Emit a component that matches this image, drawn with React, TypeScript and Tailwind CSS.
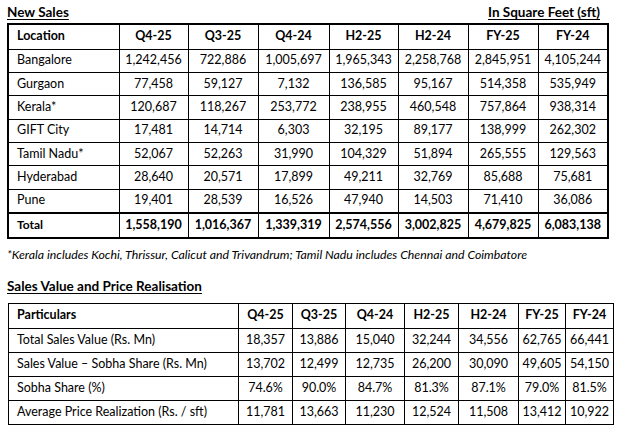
import React from "react";

const salesCols = ["Q4-25", "Q3-25", "Q4-24", "H2-25", "H2-24", "FY-25", "FY-24"];

const salesRows: [string, string[]][] = [
  ["Bangalore", ["1,242,456", "722,886", "1,005,697", "1,965,343", "2,258,768", "2,845,951", "4,105,244"]],
  ["Gurgaon", ["77,458", "59,127", "7,132", "136,585", "95,167", "514,358", "535,949"]],
  ["Kerala*", ["120,687", "118,267", "253,772", "238,955", "460,548", "757,864", "938,314"]],
  ["GIFT City", ["17,481", "14,714", "6,303", "32,195", "89,177", "138,999", "262,302"]],
  ["Tamil Nadu*", ["52,067", "52,263", "31,990", "104,329", "51,894", "265,555", "129,563"]],
  ["Hyderabad", ["28,640", "20,571", "17,899", "49,211", "32,769", "85,688", "75,681"]],
  ["Pune", ["19,401", "28,539", "16,526", "47,940", "14,503", "71,410", "36,086"]],
];

const salesTotal = ["1,558,190", "1,016,367", "1,339,319", "2,574,556", "3,002,825", "4,679,825", "6,083,138"];

const valueRows: [string, string[]][] = [
  ["Total Sales Value (Rs. Mn)", ["18,357", "13,886", "15,040", "32,244", "34,556", "62,765", "66,441"]],
  ["Sales Value – Sobha Share (Rs. Mn)", ["13,702", "12,499", "12,735", "26,200", "30,090", "49,605", "54,150"]],
  ["Sobha Share (%)", ["74.6%", "90.0%", "84.7%", "81.3%", "87.1%", "79.0%", "81.5%"]],
  ["Average Price Realization (Rs. / sft)", ["11,781", "13,663", "11,230", "12,524", "11,508", "13,412", "10,922"]],
];

const salesWidths = ["w-[111px]", "w-[69px]", "w-[70px]", "w-[71px]", "w-[69px]", "w-[70px]", "w-[70px]", "w-[70px]"];
const valueWidths = ["w-[230px]", "w-[54px]", "w-[53px]", "w-[59px]", "w-[54px]", "w-[60px]", "w-[47px]", "w-[48px]"];

const App: React.FC = () => {
  return (
    <div
      className="w-[628px] h-[434px] bg-white text-black pl-[7px] pt-[4px]"
      style={{ fontFamily: "Lato, 'Liberation Sans', sans-serif" }}
    >
      <div className="flex justify-between w-[600px] h-[19px] text-[13.5px] font-bold leading-[16px]">
        <span className="underline underline-offset-2">New Sales</span>
        <span className="underline underline-offset-2 pr-[7px]">In Square Feet (sft)</span>
      </div>

      <table className="table-fixed border-collapse border-2 border-black w-[600px] text-[12.5px]">
        <colgroup>
          {salesWidths.map((w, i) => (
            <col key={i} className={w} />
          ))}
        </colgroup>
        <thead>
          <tr className="h-[25px] font-bold">
            <th className="border border-black text-left pl-[8px]">Location</th>
            {salesCols.map((c) => (
              <th key={c} className="border border-black text-center">
                {c}
              </th>
            ))}
          </tr>
        </thead>
        <tbody>
          {salesRows.map(([name, vals]) => (
            <tr key={name} className="h-[23.4px]">
              <td className="border border-black pl-[8px]">{name}</td>
              {vals.map((v, i) => (
                <td key={i} className="border border-black text-center">
                  {v}
                </td>
              ))}
            </tr>
          ))}
          <tr className="h-[25px] font-bold border-t-2 border-black">
            <td className="border border-black border-t-2 pl-[8px] text-[12px]">Total</td>
            {salesTotal.map((v, i) => (
              <td key={i} className="border border-black border-t-2 text-center">
                {v}
              </td>
            ))}
          </tr>
        </tbody>
      </table>

      <p className="mt-[8px] h-[16px] text-[12.3px] italic leading-[16px]">
        *Kerala includes Kochi, Thrissur, Calicut and Trivandrum; Tamil Nadu includes Chennai and Coimbatore
      </p>

      <div className="mt-[15px] h-[25px] text-[13.5px] font-bold leading-[16px]">
        <span className="underline underline-offset-2">Sales Value and Price Realisation</span>
      </div>

      <table className="ml-[1px] table-fixed border-collapse border border-black w-[605px] text-[12.5px]">
        <colgroup>
          {valueWidths.map((w, i) => (
            <col key={i} className={w} />
          ))}
        </colgroup>
        <thead>
          <tr className="h-[25px] font-bold">
            <th className="border border-black text-left pl-[8px]">Particulars</th>
            {salesCols.map((c) => (
              <th key={c} className="border border-black text-center">
                {c}
              </th>
            ))}
          </tr>
        </thead>
        <tbody>
          {valueRows.map(([name, vals]) => (
            <tr key={name} className="h-[24px]">
              <td className="border border-black pl-[8px] whitespace-nowrap">{name}</td>
              {vals.map((v, i) => (
                <td key={i} className="border border-black text-center">
                  {v}
                </td>
              ))}
            </tr>
          ))}
        </tbody>
      </table>
    </div>
  );
};

export default App;
